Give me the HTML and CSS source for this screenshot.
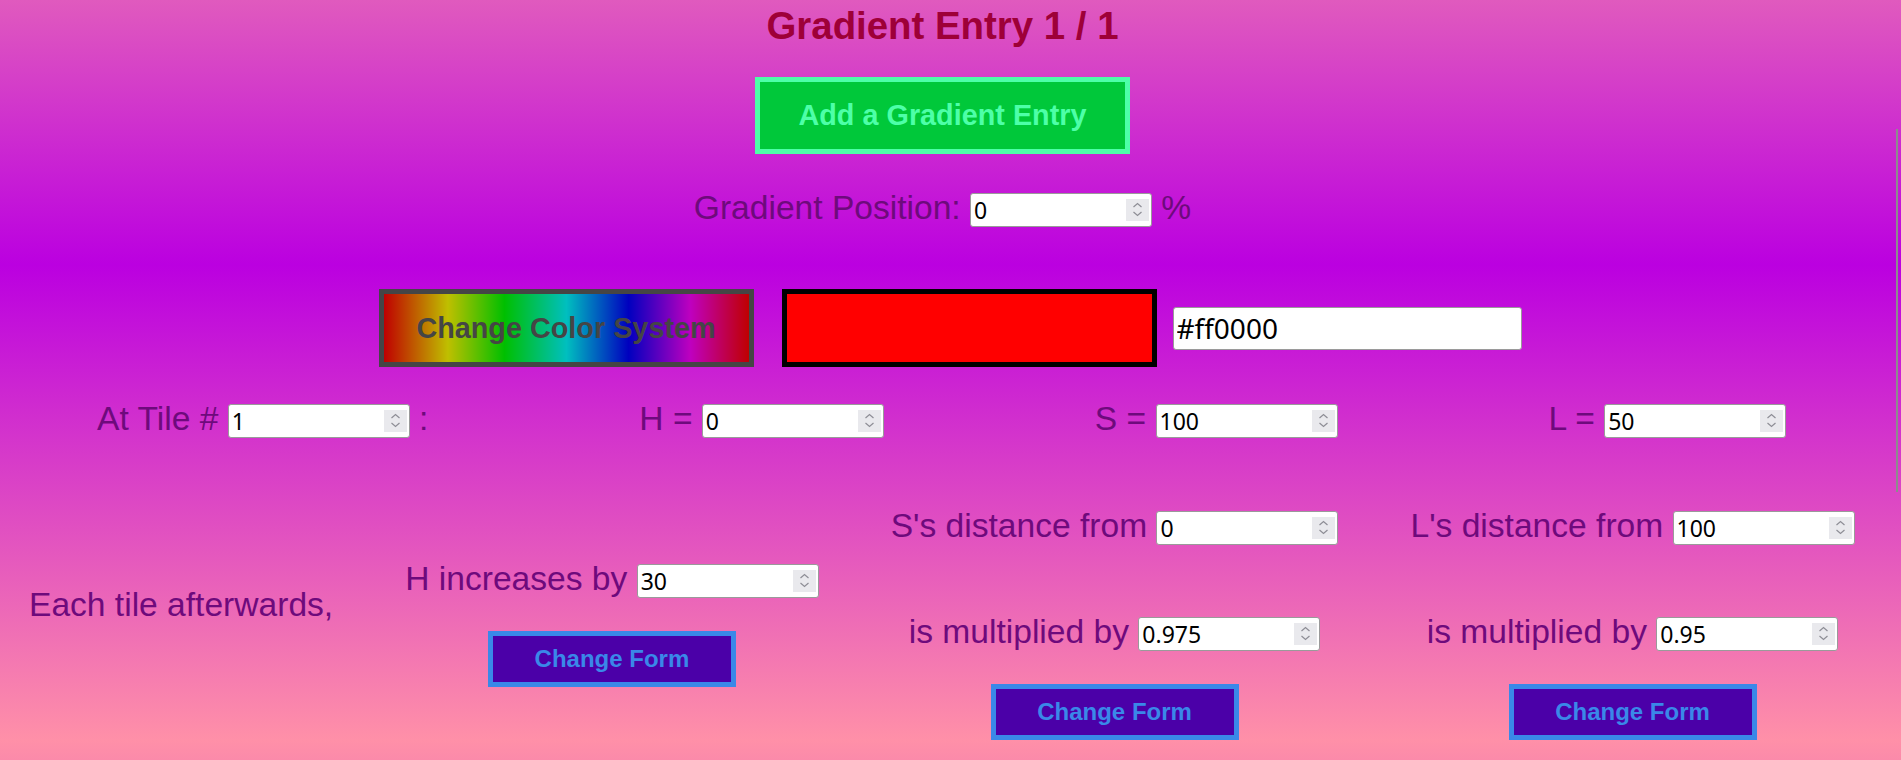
FILE: index.html
```html
<!DOCTYPE html>
<html lang="en">
<head>
<meta charset="utf-8">
<title>Gradient Entry</title>
<link rel="stylesheet" href="styles.css">
</head>
<body>
<div class="scroll-thumb"></div>
<main class="page">
  <h1 class="title">Gradient Entry 1 / 1</h1>
  <button class="add-btn">Add a Gradient Entry</button>
  <div class="line position-line">Gradient Position: <span class="num"><input type="number" value="0"><span class="spin"><svg width="23" height="22" viewBox="0 0 23 22"><path d="M7.5 8 L11.5 4.5 L15.5 8 M7.5 13 L11.5 16.5 L15.5 13" fill="none" stroke="#8e8e96" stroke-width="1.2"/></svg></span></span> %</div>
  <div class="color-row">
    <button class="system-btn">Change Color System</button>
    <div class="swatch"></div>
    <input class="hex" type="text" value="#ff0000">
  </div>
  <div class="tile-row">
    <div class="line">At Tile # <span class="num"><input type="number" value="1"><span class="spin"><svg width="23" height="22" viewBox="0 0 23 22"><path d="M7.5 8 L11.5 4.5 L15.5 8 M7.5 13 L11.5 16.5 L15.5 13" fill="none" stroke="#8e8e96" stroke-width="1.2"/></svg></span></span> :</div>
    <div class="line">H = <span class="num"><input type="number" value="0"><span class="spin"><svg width="23" height="22" viewBox="0 0 23 22"><path d="M7.5 8 L11.5 4.5 L15.5 8 M7.5 13 L11.5 16.5 L15.5 13" fill="none" stroke="#8e8e96" stroke-width="1.2"/></svg></span></span></div>
    <div class="line">S = <span class="num"><input type="number" value="100"><span class="spin"><svg width="23" height="22" viewBox="0 0 23 22"><path d="M7.5 8 L11.5 4.5 L15.5 8 M7.5 13 L11.5 16.5 L15.5 13" fill="none" stroke="#8e8e96" stroke-width="1.2"/></svg></span></span></div>
    <div class="line">L = <span class="num"><input type="number" value="50"><span class="spin"><svg width="23" height="22" viewBox="0 0 23 22"><path d="M7.5 8 L11.5 4.5 L15.5 8 M7.5 13 L11.5 16.5 L15.5 13" fill="none" stroke="#8e8e96" stroke-width="1.2"/></svg></span></span></div>
  </div>
  <div class="after-row">
    <div class="line lead">Each tile afterwards,</div>
    <div class="col">
      <div class="line">H increases by <span class="num"><input type="number" value="30"><span class="spin"><svg width="23" height="22" viewBox="0 0 23 22"><path d="M7.5 8 L11.5 4.5 L15.5 8 M7.5 13 L11.5 16.5 L15.5 13" fill="none" stroke="#8e8e96" stroke-width="1.2"/></svg></span></span></div>
      <button class="form-btn">Change Form</button>
    </div>
    <div class="col">
      <div class="line">S's distance from <span class="num"><input type="number" value="0"><span class="spin"><svg width="23" height="22" viewBox="0 0 23 22"><path d="M7.5 8 L11.5 4.5 L15.5 8 M7.5 13 L11.5 16.5 L15.5 13" fill="none" stroke="#8e8e96" stroke-width="1.2"/></svg></span></span></div>
      <div class="line">is multiplied by <span class="num"><input type="number" value="0.975"><span class="spin"><svg width="23" height="22" viewBox="0 0 23 22"><path d="M7.5 8 L11.5 4.5 L15.5 8 M7.5 13 L11.5 16.5 L15.5 13" fill="none" stroke="#8e8e96" stroke-width="1.2"/></svg></span></span></div>
      <button class="form-btn">Change Form</button>
    </div>
    <div class="col">
      <div class="line">L's distance from <span class="num"><input type="number" value="100"><span class="spin"><svg width="23" height="22" viewBox="0 0 23 22"><path d="M7.5 8 L11.5 4.5 L15.5 8 M7.5 13 L11.5 16.5 L15.5 13" fill="none" stroke="#8e8e96" stroke-width="1.2"/></svg></span></span></div>
      <div class="line">is multiplied by <span class="num"><input type="number" value="0.95"><span class="spin"><svg width="23" height="22" viewBox="0 0 23 22"><path d="M7.5 8 L11.5 4.5 L15.5 8 M7.5 13 L11.5 16.5 L15.5 13" fill="none" stroke="#8e8e96" stroke-width="1.2"/></svg></span></span></div>
      <button class="form-btn">Change Form</button>
    </div>
  </div>
</main>
</body>
</html>
```
FILE: styles.css
```css
html {
  height: 100%;
  overflow: hidden;
  background: linear-gradient(180deg, #e05abe 0px, #bb00e0 265px, #ff90a8 740px, #fb8aaa 760px);
}

body {
  margin: 0;
  font-family: "Liberation Sans", Arial, sans-serif;
}

.page {
  width: 1869px;
  margin-left: 8px;
  text-align: center;
}

.title {
  margin: 0;
  padding-top: 4px;
  font-size: 38.4px;
  line-height: 44px;
  font-weight: bold;
  color: #9e0038;
}

.add-btn {
  display: block;
  margin: 29px auto 0;
  box-sizing: border-box;
  padding: 17px 38px;
  border: 5px solid #4dffa8;
  background: #00c83a;
  color: #4dffa8;
  font: bold 28.8px/33px "Liberation Sans", Arial, sans-serif;
}

.line {
  font-size: 33.6px;
  line-height: 38px;
  color: #6e0a7c;
  white-space: nowrap;
}

.position-line {
  margin-top: 35px;
}

.num {
  display: inline-flex;
  align-items: center;
  width: 182px;
  height: 34px;
  box-sizing: border-box;
  border: 1px solid #9a9a9a;
  border-radius: 3px;
  background: #fff;
  vertical-align: baseline;
}

.num input {
  flex: 1;
  min-width: 0;
  height: 100%;
  box-sizing: border-box;
  border: 0;
  outline: 0;
  margin: 0;
  padding: 1px 0 0 3px;
  background: transparent;
  color: #000;
  font: 23px "Noto Sans", "Open Sans", sans-serif;
  -moz-appearance: textfield;
  appearance: textfield;
}

.num input::-webkit-inner-spin-button,
.num input::-webkit-outer-spin-button {
  -webkit-appearance: none;
  margin: 0;
}

.spin {
  display: flex;
  width: 23px;
  height: 22px;
  margin-right: 2px;
  background: #e9e9ed;
}

.color-row {
  display: flex;
  justify-content: center;
  align-items: center;
  margin-top: 62px;
  padding-left: 15px;
}

.system-btn {
  width: 375px;
  height: 78px;
  box-sizing: border-box;
  padding: 0;
  border: 5px solid #454545;
  background: linear-gradient(90deg, #bf0000 0%, #bfbf00 17.5%, #00bf00 33%, #00bfbf 50%, #0000bf 67%, #bf00bf 84%, #bf0000 100%);
  color: #454545;
  font: bold 28.8px "Liberation Sans", Arial, sans-serif;
}

.swatch {
  width: 375px;
  height: 78px;
  box-sizing: border-box;
  margin-left: 28px;
  border: 5px solid #000;
  background: #ff0000;
}

.hex {
  width: 349px;
  height: 43px;
  box-sizing: border-box;
  margin: 0 0 0 16px;
  padding: 0 3px;
  border: 1px solid #9a9a9a;
  border-radius: 3px;
  background: #fff;
  color: #000;
  font: 28px "Noto Sans", "Open Sans", sans-serif;
  outline: 0;
}

.tile-row {
  display: flex;
  gap: 211px;
  margin-top: 33px;
  padding-left: 89px;
}

.after-row {
  display: flex;
  align-items: center;
  gap: 72px;
  margin-top: 69px;
  padding-left: 21px;
}

.lead {
  padding-bottom: 38px;
}

.col {
  display: flex;
  flex-direction: column;
  align-items: center;
}

.col .line + .line {
  margin-top: 68px;
}

.form-btn {
  margin-top: 33px;
  width: 248px;
  height: 56px;
  box-sizing: border-box;
  padding: 0;
  border: 5px solid #3a88e8;
  background: #4b00a8;
  color: #3a88e8;
  font: bold 24px "Liberation Sans", Arial, sans-serif;
}

.scroll-thumb {
  position: fixed;
  top: 129px;
  right: 3px;
  width: 2px;
  height: 363px;
  background: #8c8c8c;
}
```
